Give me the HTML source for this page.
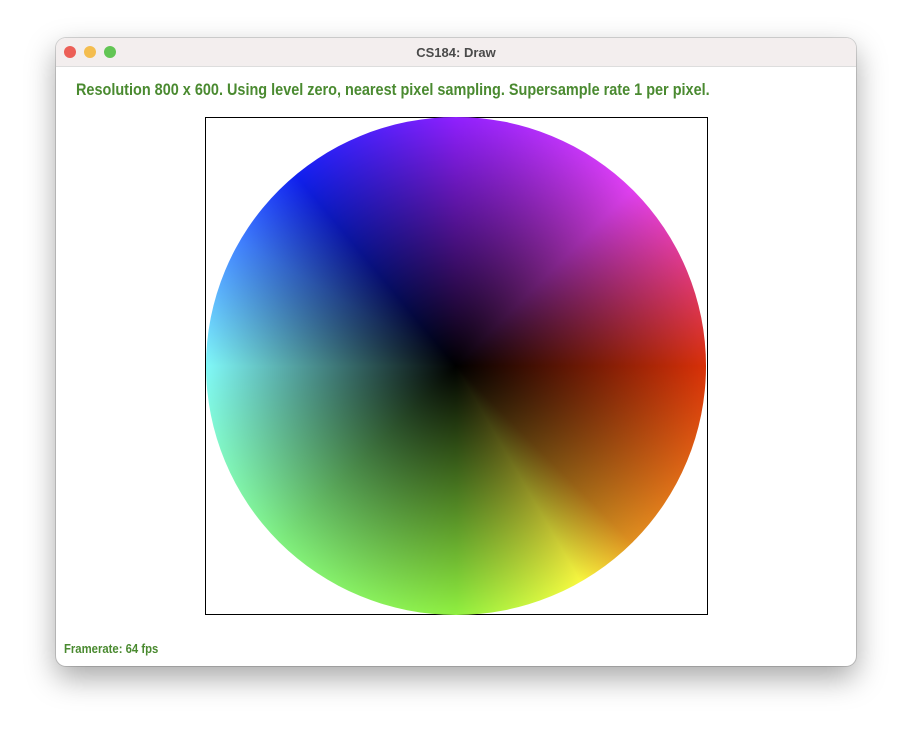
<!DOCTYPE html>
<html><head><style>
body{margin:0;width:912px;height:740px;background:#fff;position:relative;overflow:hidden;font-family:"Liberation Sans",sans-serif}
.win{position:absolute;left:56px;top:38px;width:800px;height:628px;border-radius:10px;background:#fff;box-shadow:0 12px 30px rgba(0,0,0,.35),0 0 0 1px rgba(0,0,0,.15);overflow:hidden}
.tb{height:28px;background:#f3eeee;border-bottom:1px solid #ddd;position:relative}
.tb .t{position:absolute;left:0;right:0;top:7px;text-align:center;font-size:13px;font-weight:bold;color:#4a4a4a}
.d{position:absolute;top:8px;width:12px;height:12px;border-radius:50%}
.txt{position:absolute;color:#4a8a30;font-weight:bold;transform-origin:left top;white-space:nowrap}
.box{position:absolute;left:149px;top:79px;width:501px;height:496px;border:1px solid #000}
.wheel{position:absolute;left:150px;top:79px;width:500px;height:498px;border-radius:50%;
background:radial-gradient(circle,#000 0%,rgba(0,0,0,0) 70.7%),conic-gradient(from 0deg,#9020ff,#e040f0 45deg,#d83008 90deg,#e09020 135deg,#f8f840 150deg,#90f040 180deg,#80f080 225deg,#80f8f8 270deg,#4080ff 300deg,#1020f0 320deg,#9020ff 360deg)}
</style></head><body>
<div class="win">
<div class="tb"><div class="d" style="left:8px;background:#ec5f57"></div><div class="d" style="left:28px;background:#f4bd4f"></div><div class="d" style="left:48px;background:#62c554"></div><div class="t">CS184: Draw</div></div>
<div class="txt" style="left:20px;top:42px;font-size:17px;transform:scaleX(.85)">Resolution 800 x 600. Using level zero, nearest pixel sampling. Supersample rate 1 per pixel.</div>
<div class="box"></div>
<div class="wheel"></div>
<div class="txt" style="left:8px;top:603px;font-size:13px;transform:scaleX(.87)">Framerate: 64 fps</div>
</div>
</body></html>
